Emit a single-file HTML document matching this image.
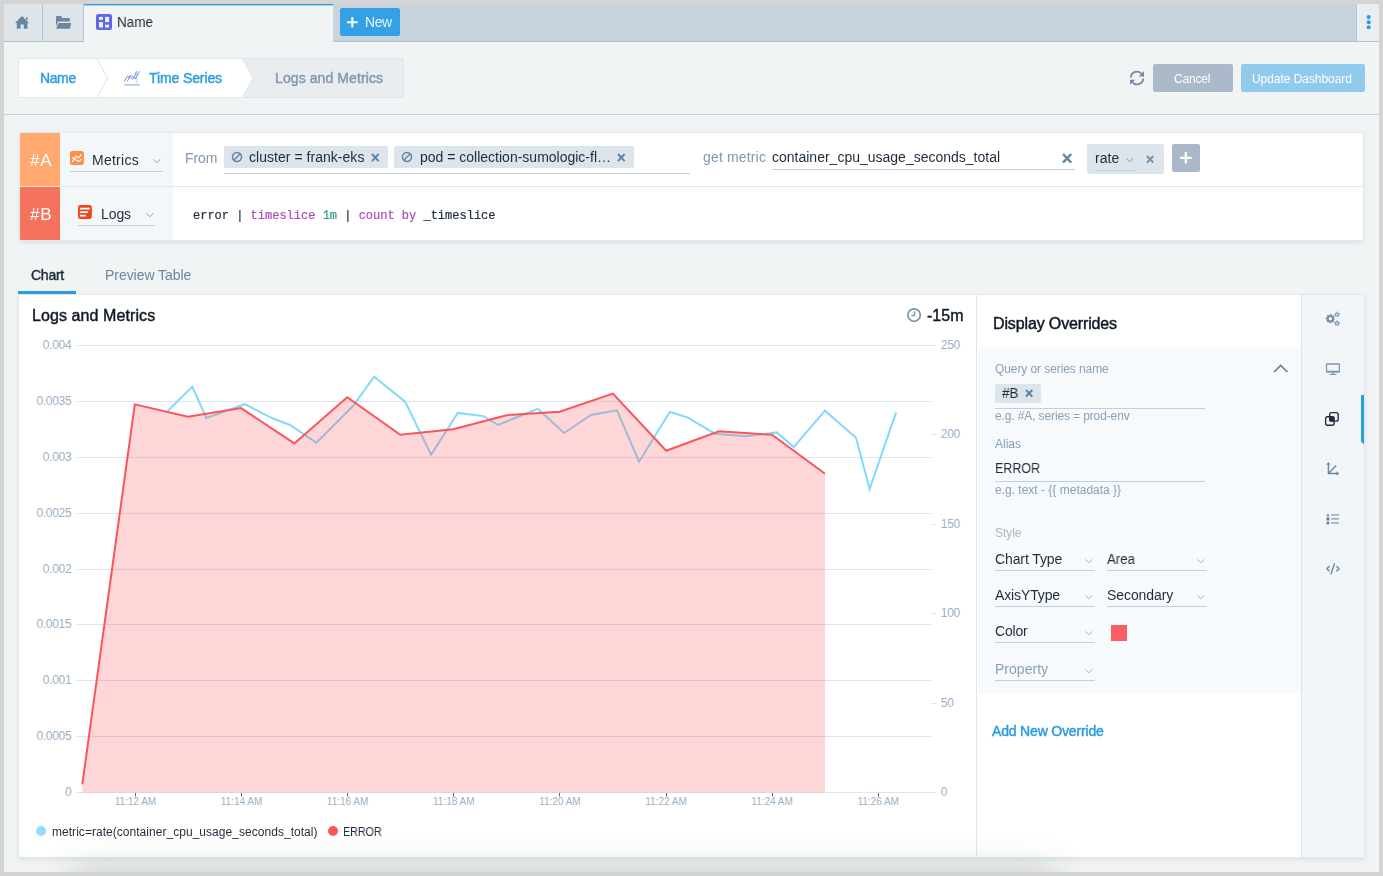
<!DOCTYPE html>
<html lang="en">
<head>
<meta charset="utf-8">
<title>Name - Logs and Metrics</title>
<style>
*{box-sizing:border-box}
html,body{margin:0;padding:0}
body{width:1383px;height:876px;position:relative;overflow:hidden;background:#d4d4d4;font-family:'Liberation Sans', sans-serif;}
.app{position:absolute;left:4px;top:4px;width:1375px;height:868px;background:#f0f4f5;overflow:hidden}
.s,.a{position:absolute}
.t{position:absolute;white-space:pre;line-height:20px;display:block;will-change:transform}
svg{display:block;overflow:visible}
.ul{position:absolute;height:1px;background:#c3cfda}
.code{-webkit-text-stroke:0.2px currentColor}
.chip{position:absolute;background:#dde4eb;border-radius:2px}
</style>
</head>
<body>
<div class="app"></div>

<!-- top tab bar -->
<header class="s" style="left:4px;top:4px;width:1375px;height:38px;background:#c8d4dd;border-bottom:1px solid #b3c1ce">
  <div class="a" style="left:0;top:0;width:39px;height:37px;background:#dde4ea;border-right:1px solid #b6c4d1"></div>
  <svg class="a" style="left:11.2px;top:11.8px" width="14.2" height="12.9" viewBox="15.2 15.8 14.2 12.9"><path fill="#6b859e" d="M22.25 15.9 L29.3 22.9 H27.7 V28.6 H24 V24.2 H20.7 V28.6 H17 V22.9 H15.2 Z M26.2 17 H27.7 V20.6 L26.2 19.2 Z"/></svg>
  <div class="a" style="left:39px;top:0;width:41px;height:37px;background:#dde4ea;border-right:1px solid #b6c4d1"></div>
  <svg class="a" style="left:52px;top:12.1px" width="15.2" height="12.9" viewBox="56 16.1 15.2 12.9"><path fill="#6b859e" d="M56 17.1 Q56 16.1 57 16.1 H60.8 Q61.8 16.1 61.8 17.1 V18.1 H68.9 Q69.9 18.1 69.9 19.1 V21.6 H59.2 Q57.9 21.6 57.4 22.8 L56 26.4 Z M59 23.1 H70.5 Q71.3 23.1 71.1 23.9 L70.1 28.1 Q69.9 28.9 69.1 28.9 H56.9 Q56.1 28.9 56.4 28.1 L58 23.9 Q58.3 23.1 59 23.1 Z"/></svg>
  <div class="a" style="left:80px;top:0;width:249px;height:38px;background:linear-gradient(#2d9de0,#2d9de0) 0 0/100% 1px no-repeat,linear-gradient(rgba(45,157,224,.38),rgba(45,157,224,.38)) 0 1px/100% 1px no-repeat,#f0f4f5"></div>
  <svg class="a" style="left:92px;top:10px" width="16" height="16" viewBox="0 0 16 16"><rect width="16" height="16" rx="2.2" fill="#5d68e2"/><rect x="3" y="2.9" width="4" height="2.9" fill="#eceeff"/><rect x="3" y="8" width="4" height="5.5" fill="#eceeff"/><rect x="9.1" y="2.9" width="4" height="5.2" fill="#eceeff"/><rect x="9.1" y="10.6" width="4" height="2.9" fill="#eceeff"/></svg>
  <span class="t" style="left:113.1px;top:8.0px;font-size:14px;color:#1f2c3b;transform:scaleX(0.964);transform-origin:0 0;">Name</span>
  <div class="a" style="left:336px;top:4px;width:60px;height:28px;background:#33a1e3;border-radius:2.5px"></div>
  <svg class="a" style="left:342.8px;top:13px" width="10.6" height="10.6" viewBox="0 0 10.6 10.6"><path d="M5.3 0 V10.6 M0 5.3 H10.6" stroke="#fff" stroke-width="2" fill="none"/></svg>
  <span class="t" style="left:360.8px;top:8.0px;font-size:14px;color:#e8f5fd;letter-spacing:-0.458px;">New</span>
  <div class="a" style="left:1352px;top:0;width:23px;height:37px;background:#eaeef2;border-left:1px solid #b9c7d4"></div>
  <svg class="a" style="left:1362px;top:10px" width="6" height="16" viewBox="1366 14 6 16"><circle cx="1368.7" cy="17.1" r="2.05" fill="#2a9ae3"/><circle cx="1368.7" cy="22.2" r="2.05" fill="#2a9ae3"/><circle cx="1368.7" cy="27.3" r="2.05" fill="#2a9ae3"/></svg>
</header>

<!-- breadcrumb + actions -->
<nav class="s" style="left:4px;top:42px;width:1375px;height:73px;border-bottom:1px solid #c3cfda">
  <svg class="a" style="left:14px;top:16px" width="387" height="40" viewBox="18 58 387 40">
    <path d="M240 58.5 H402 Q403.5 58.5 403.5 60 V96 Q403.5 97.5 402 97.5 H240 Z" fill="#e9edf0" stroke="#e0e6eb" stroke-width="1"/>
    <path d="M20.5 58.5 H242.2 L253.2 78 L242.2 97.5 H20.5 Q18.5 97.5 18.5 95.5 V60.5 Q18.5 58.5 20.5 58.5 Z" fill="#fff" stroke="#e0e6eb" stroke-width="1"/>
    <path d="M96.9 58.8 L107.6 78 L96.9 97.2" fill="none" stroke="#e0e6eb" stroke-width="1.1"/>
  </svg>
  <span class="t" style="left:35.7px;top:26.0px;font-size:14px;color:#2d9de0;letter-spacing:-0.386px;-webkit-text-stroke:0.45px #2d9de0;">Name</span>
  <svg class="a" style="left:120px;top:29px" width="16.2" height="15" viewBox="124 71 16.2 15"><path d="M124.2 84.85 H140" stroke="#b9c4ee" stroke-width="1.7"/><path d="M136.6 71.2 V83.2" stroke="#b5ebe6" stroke-width="1.5"/><path d="M124.3 81.6 L127.3 76.1 L129.4 77.1 L132.6 78.9 L134.2 77.4 L136.5 71.4 M127.3 81.4 L130.4 75.3 L133.6 77.4 L135.5 78.5 L139.5 71.4" fill="none" stroke="#5a78d8" stroke-width="0.85"/></svg>
  <span class="t" style="left:144.8px;top:26.0px;font-size:14px;color:#2d9de0;letter-spacing:-0.107px;-webkit-text-stroke:0.45px #2d9de0;">Time Series</span>
  <span class="t" style="left:270.9px;top:26.0px;font-size:14px;color:#8299ae;letter-spacing:0.093px;-webkit-text-stroke:0.45px #8299ae;">Logs and Metrics</span>
  <svg class="a" style="left:1124.9px;top:28.1px" width="16" height="16" viewBox="-8 -8 16 16"><path d="M-6.3 -0.5 A6.25 6.25 0 0 1 5 -3.8 M6.3 0.5 A6.25 6.25 0 0 1 -5 3.8" fill="none" stroke="#7089a3" stroke-width="1.8"/><path d="M7 -7 V-1.5 H1.7 Z M-7 6.8 V1.8 H-1.9 Z" fill="#7089a3"/></svg>
  <div class="a" style="left:1149px;top:22.3px;width:80px;height:27.6px;background:#abb9cb;border-radius:2px"></div>
  <span class="t" style="left:1170.1px;top:27.0px;font-size:12px;color:#fff;letter-spacing:-0.192px;">Cancel</span>
  <div class="a" style="left:1237px;top:22.3px;width:124px;height:27.6px;background:#90caec;border-radius:2px"></div>
  <span class="t" style="left:1248.4px;top:27.0px;font-size:12px;color:#fff;letter-spacing:-0.056px;">Update Dashboard</span>
</nav>

<!-- query builder -->
<section class="s" style="left:20px;top:133px;width:1343px;height:107px;background:#fff;border-radius:2px;box-shadow:0 0 0 1px #e3e9ee,0 2px 5px rgba(60,80,100,.16)">
  <div class="a" style="left:0;top:0;width:40px;height:53.5px;background:#ffa86f;border-radius:1px 0 0 0"></div>
  <div class="a" style="left:0;top:53.5px;width:40px;height:53.5px;background:#f4735c;border-radius:0 0 0 1px"></div>
  <div class="a" style="left:40px;top:0;width:113px;height:107px;background:#f4f7fa"></div>
  <div class="a" style="left:40px;top:53px;width:1303px;height:1px;background:#e0e6ec"></div><div class="a" style="left:0;top:53px;width:40px;height:1px;background:rgba(240,244,247,.75)"></div>
  <span class="t" style="left:9.5px;top:18.0px;font-size:17px;color:#fff;letter-spacing:0.903px;">#A</span>
  <span class="t" style="left:9.5px;top:72.0px;font-size:17px;color:#fff;letter-spacing:0.903px;">#B</span>
  <!-- row A -->
  <svg class="a" style="left:50.2px;top:18px" width="13.9" height="14.1" viewBox="0 0 13.9 14.1"><rect width="13.9" height="14.1" rx="2.2" fill="#ff8f47"/><path d="M2.2 10.8 L6.2 5.2 L8.8 6.8 L11.5 3.3 M2.2 6.5 L5.6 8.7 L8.8 10.6 L11.5 8.1" fill="none" stroke="#fff" stroke-width="1.25"/></svg>
  <span class="t" style="left:72.4px;top:17.0px;font-size:14px;color:#1f2c3b;letter-spacing:0.262px;">Metrics</span>
  <svg class="a" style="left:131.30px;top:23.80px" width="11.60" height="8.20" viewBox="-2 -2 11.60 8.20"><path d="M0.3 0.3 L3.80 3.70 L7.30 0.3" fill="none" stroke="#8b9eb2" stroke-width="1.0"/></svg>
  <div class="ul" style="left:50.3px;top:38px;width:92.6px"></div>
  <span class="t" style="left:165.3px;top:15.0px;font-size:14px;color:#8198ae;letter-spacing:-0.124px;">From</span>
  <div class="chip" style="left:204.2px;top:13.3px;width:163.8px;height:21.7px"></div>
  <svg class="a" style="left:211.20px;top:18.10px" width="12" height="12" viewBox="-6 -6 12 12"><circle r="4.55" fill="none" stroke="#5f82a3" stroke-width="1.4"/><path d="M-3.2 3.2 L3.2 -3.2" stroke="#5f82a3" stroke-width="1.4"/></svg>
  <span class="t" style="left:229.2px;top:14.0px;font-size:14px;color:#1f2c3b;letter-spacing:0.035px;">cluster = frank-eks</span>
  <svg class="a" style="left:349.80px;top:18.65px" width="10.6" height="11.1" viewBox="-5.3 -5.55 10.6 11.1"><path d="M-3.3 -3.55 L3.3 3.55 M3.3 -3.55 L-3.3 3.55" fill="none" stroke="#5f82a3" stroke-width="1.9"/></svg>
  <div class="chip" style="left:374.1px;top:13.3px;width:239.7px;height:21.7px"></div>
  <svg class="a" style="left:380.80px;top:18.10px" width="12" height="12" viewBox="-6 -6 12 12"><circle r="4.55" fill="none" stroke="#5f82a3" stroke-width="1.4"/><path d="M-3.2 3.2 L3.2 -3.2" stroke="#5f82a3" stroke-width="1.4"/></svg>
  <span class="t" style="left:399.5px;top:14.0px;font-size:14px;color:#1f2c3b;">pod = collection-sumologic-fl…</span>
  <svg class="a" style="left:595.70px;top:18.65px" width="10.6" height="11.1" viewBox="-5.3 -5.55 10.6 11.1"><path d="M-3.3 -3.55 L3.3 3.55 M3.3 -3.55 L-3.3 3.55" fill="none" stroke="#5f82a3" stroke-width="1.9"/></svg>
  <div class="ul" style="left:204.2px;top:40px;width:465.7px"></div>
  <span class="t" style="left:682.7px;top:14.0px;font-size:14px;color:#8198ae;letter-spacing:0.159px;">get metric</span>
  <span class="t" style="left:752.1px;top:14.0px;font-size:14px;color:#1f2c3b;">container_cpu_usage_seconds_total</span>
  <svg class="a" style="left:1040.60px;top:18.90px" width="12.2" height="12.6" viewBox="-6.1 -6.3 12.2 12.6"><path d="M-4.1 -4.3 L4.1 4.3 M4.1 -4.3 L-4.1 4.3" fill="none" stroke="#6b859e" stroke-width="2.4"/></svg>
  <div class="ul" style="left:752px;top:36px;width:302.5px"></div>
  <div class="chip" style="left:1067.1px;top:11.1px;width:76.8px;height:29.7px"></div>
  <span class="t" style="left:1075.1px;top:15.0px;font-size:14px;color:#1f2c3b;letter-spacing:0.058px;">rate</span>
  <svg class="a" style="left:1104.00px;top:22.90px" width="11.50" height="8.10" viewBox="-2 -2 11.50 8.10"><path d="M0.3 0.3 L3.75 3.60 L7.20 0.3" fill="none" stroke="#8b9eb2" stroke-width="1.0"/></svg>
  <div class="ul" style="left:1074.7px;top:37px;width:41.2px"></div>
  <svg class="a" style="left:1124.75px;top:20.75px" width="10.3" height="10.7" viewBox="-5.15 -5.35 10.3 10.7"><path d="M-3.15 -3.35 L3.15 3.35 M3.15 -3.35 L-3.15 3.35" fill="none" stroke="#7390ad" stroke-width="1.9"/></svg>
  <div class="a" style="left:1151.9px;top:11.1px;width:28px;height:27.8px;background:#aab7c8;border-radius:2px"></div>
  <svg class="a" style="left:1160.1px;top:19.2px" width="11.6" height="11.6" viewBox="0 0 11.6 11.6"><path d="M5.8 0 V11.6 M0 5.8 H11.6" stroke="#fff" stroke-width="2.2" fill="none"/></svg>
  <!-- row B -->
  <svg class="a" style="left:58.2px;top:72px" width="13.9" height="14.1" viewBox="0 0 13.9 14.1"><rect width="13.9" height="14.1" rx="2.4" fill="#f2451f"/><path d="M1.9 3.6 H11.8 M1.9 7.1 H10.1 M1.9 10.6 H7.8" fill="none" stroke="#fff" stroke-width="1.6"/></svg>
  <span class="t" style="left:80.7px;top:71.0px;font-size:14px;color:#1f2c3b;letter-spacing:-0.086px;">Logs</span>
  <svg class="a" style="left:123.50px;top:77.80px" width="11.60" height="8.20" viewBox="-2 -2 11.60 8.20"><path d="M0.3 0.3 L3.80 3.70 L7.30 0.3" fill="none" stroke="#8b9eb2" stroke-width="1.0"/></svg>
  <div class="ul" style="left:58.3px;top:92px;width:76.6px"></div>
  <span class="t code" style="left:173.4px;top:73.0px;font-size:12px;color:#1f2c3b;font-family:'Liberation Mono', monospace;">error | <span style="color:#b04ab5">timeslice</span> <span style="color:#2a9d8f">1m</span> | <span style="color:#b04ab5">count</span> <span style="color:#b04ab5">by</span> _timeslice</span>
</section>

<!-- view tabs -->
<div class="s" style="left:19px;top:255px;width:400px;height:40px;">
  <span class="t" style="left:11.6px;top:10.0px;font-size:14px;color:#1f2c3b;letter-spacing:-0.259px;-webkit-text-stroke:0.45px #1f2c3b;">Chart</span>
  <span class="t" style="left:86.0px;top:10.0px;font-size:14px;color:#6b859e;letter-spacing:-0.051px;">Preview Table</span>
  <div class="a" style="left:-1px;top:36px;width:58px;height:3px;background:#2d9de0"></div>
</div>

<!-- main panel -->
<main class="s" style="left:19px;top:295px;width:1345px;height:562px;background:#fff;box-shadow:0 0 0 1px #e1e7ec,0 2px 5px rgba(60,80,100,.14)">
  <!-- chart -->
  <div class="a" style="left:0;top:0;width:958px;height:562px">
    <svg class="a" style="left:0;top:0" width="958" height="562" viewBox="19 295 958 562">
<style>.ax{font:12px 'Liberation Sans',sans-serif;fill:#9db1c5;letter-spacing:-0.3px}.axx{font:10px 'Liberation Sans',sans-serif;fill:#9db1c5}</style>
<line x1="76.5" x2="931" y1="792.5" y2="792.5" stroke="#dde5ec" stroke-width="1"/><text x="71.3" y="796.3" text-anchor="end" class="ax">0</text><line x1="76.5" x2="931" y1="736.5" y2="736.5" stroke="#dde5ec" stroke-width="1"/><text x="71.3" y="740.3" text-anchor="end" class="ax">0.0005</text><line x1="76.5" x2="931" y1="680.5" y2="680.5" stroke="#dde5ec" stroke-width="1"/><text x="71.3" y="684.3" text-anchor="end" class="ax">0.001</text><line x1="76.5" x2="931" y1="624.5" y2="624.5" stroke="#dde5ec" stroke-width="1"/><text x="71.3" y="628.3" text-anchor="end" class="ax">0.0015</text><line x1="76.5" x2="931" y1="569.5" y2="569.5" stroke="#dde5ec" stroke-width="1"/><text x="71.3" y="573.3" text-anchor="end" class="ax">0.002</text><line x1="76.5" x2="931" y1="513.5" y2="513.5" stroke="#dde5ec" stroke-width="1"/><text x="71.3" y="517.3" text-anchor="end" class="ax">0.0025</text><line x1="76.5" x2="931" y1="457.5" y2="457.5" stroke="#dde5ec" stroke-width="1"/><text x="71.3" y="461.3" text-anchor="end" class="ax">0.003</text><line x1="76.5" x2="931" y1="401.5" y2="401.5" stroke="#dde5ec" stroke-width="1"/><text x="71.3" y="405.3" text-anchor="end" class="ax">0.0035</text><line x1="76.5" x2="931" y1="345.5" y2="345.5" stroke="#dde5ec" stroke-width="1"/><text x="71.3" y="349.3" text-anchor="end" class="ax">0.004</text><line x1="931" x2="936" y1="792.5" y2="792.5" stroke="#dde5ec" stroke-width="1"/><text x="940.8" y="796.3" class="ax">0</text><line x1="931" x2="936" y1="703.5" y2="703.5" stroke="#dde5ec" stroke-width="1"/><text x="940.8" y="707.3" class="ax">50</text><line x1="931" x2="936" y1="613.5" y2="613.5" stroke="#dde5ec" stroke-width="1"/><text x="940.8" y="617.3" class="ax">100</text><line x1="931" x2="936" y1="524.5" y2="524.5" stroke="#dde5ec" stroke-width="1"/><text x="940.8" y="528.3" class="ax">150</text><line x1="931" x2="936" y1="434.5" y2="434.5" stroke="#dde5ec" stroke-width="1"/><text x="940.8" y="438.3" class="ax">200</text><line x1="931" x2="936" y1="345.5" y2="345.5" stroke="#dde5ec" stroke-width="1"/><text x="940.8" y="349.3" class="ax">250</text>
<polyline points="166.3,412.4 192.3,386.8 206.4,417.9 244.8,404.2 272.6,418.3 290.0,425.0 316.4,442.8 353.0,406.0 374.1,376.6 405.1,401.6 431.1,454.7 457.8,412.9 483.8,416.1 497.9,425.0 537.8,408.7 564.1,433.0 591.0,415.0 617.0,410.3 639.0,461.7 669.8,412.0 687.4,417.4 715.0,433.7 745.8,436.3 776.8,432.4 793.7,447.1 825.0,410.7 856.0,437.8 869.6,489.0 896.1,412.4" fill="none" stroke="#82d9fb" stroke-width="2" stroke-linejoin="miter"/>
<polygon points="82.3,784.4 134.8,404.4 188.0,416.8 241.1,408.1 294.3,443.4 347.2,397.2 400.3,434.8 453.2,429.3 506.6,415.2 559.7,411.8 612.9,393.6 666.2,450.8 718.9,431.3 772.0,434.8 825.0,473.8 825,792.5 82.3,792.5" fill="#fb5d61" fill-opacity="0.25"/>
<polyline points="82.3,784.4 134.8,404.4 188.0,416.8 241.1,408.1 294.3,443.4 347.2,397.2 400.3,434.8 453.2,429.3 506.6,415.2 559.7,411.8 612.9,393.6 666.2,450.8 718.9,431.3 772.0,434.8 825.0,473.8" fill="none" stroke="#f9565b" stroke-width="2" stroke-linejoin="miter"/>
<line x1="135.5" x2="135.5" y1="793" y2="796.5" stroke="#5b6b7c" stroke-width="1"/><text x="135.4" y="805.3" text-anchor="middle" class="axx">11:12 AM</text><line x1="241.5" x2="241.5" y1="793" y2="796.5" stroke="#5b6b7c" stroke-width="1"/><text x="241.5" y="805.3" text-anchor="middle" class="axx">11:14 AM</text><line x1="347.5" x2="347.5" y1="793" y2="796.5" stroke="#5b6b7c" stroke-width="1"/><text x="347.6" y="805.3" text-anchor="middle" class="axx">11:16 AM</text><line x1="453.5" x2="453.5" y1="793" y2="796.5" stroke="#5b6b7c" stroke-width="1"/><text x="453.8" y="805.3" text-anchor="middle" class="axx">11:18 AM</text><line x1="559.5" x2="559.5" y1="793" y2="796.5" stroke="#5b6b7c" stroke-width="1"/><text x="559.9" y="805.3" text-anchor="middle" class="axx">11:20 AM</text><line x1="666.5" x2="666.5" y1="793" y2="796.5" stroke="#5b6b7c" stroke-width="1"/><text x="666.0" y="805.3" text-anchor="middle" class="axx">11:22 AM</text><line x1="772.5" x2="772.5" y1="793" y2="796.5" stroke="#5b6b7c" stroke-width="1"/><text x="772.1" y="805.3" text-anchor="middle" class="axx">11:24 AM</text><line x1="878.5" x2="878.5" y1="793" y2="796.5" stroke="#5b6b7c" stroke-width="1"/><text x="878.2" y="805.3" text-anchor="middle" class="axx">11:26 AM</text>
</svg>
    <span class="t" style="left:12.7px;top:11.0px;font-size:16px;color:#111a24;letter-spacing:0.090px;-webkit-text-stroke:0.45px #111a24;">Logs and Metrics</span>
    <svg class="a" style="left:887.8px;top:13px" width="14.2" height="14.2" viewBox="0 0 14.2 14.2"><circle cx="7.1" cy="7.1" r="6.2" fill="none" stroke="#7a96b2" stroke-width="1.7"/><path d="M7.5 3.2 V7.6 H4.3" fill="none" stroke="#7a96b2" stroke-width="1.4"/></svg>
    <span class="t" style="left:907.8px;top:11.0px;font-size:16px;color:#111a24;letter-spacing:0.016px;-webkit-text-stroke:0.45px #111a24;">-15m</span>
    <div class="a" style="left:17.3px;top:530.8px;width:10px;height:10px;border-radius:5px;background:#8fdcfb"></div>
    <span class="t" style="left:32.5px;top:527.0px;font-size:12px;color:#1f2c3b;letter-spacing:0.037px;">metric=rate(container_cpu_usage_seconds_total)</span>
    <div class="a" style="left:309.2px;top:530.6px;width:10px;height:10px;border-radius:5px;background:#f9565b"></div>
    <span class="t" style="left:323.7px;top:527.0px;font-size:12px;color:#1f2c3b;transform:scaleX(0.893);transform-origin:0 0;">ERROR</span>
  </div>
  <!-- display overrides -->
  <div class="a" style="left:959px;top:52px;width:323px;height:347.4px;background:#f6fafd"></div>
  <div class="a" style="left:957px;top:0;width:1px;height:562px;background:#dfe5ea"></div>
  <span class="t" style="left:974.4px;top:19.0px;font-size:16px;color:#111a24;letter-spacing:-0.135px;-webkit-text-stroke:0.45px #111a24;">Display Overrides</span>
  <span class="t" style="left:976.1px;top:64.0px;font-size:12px;color:#8aa0b5;letter-spacing:-0.084px;">Query or series name</span>
  <svg class="a" style="left:1254.3px;top:68.5px" width="15.4" height="9.4" viewBox="-1 -1 15.4 9.4"><path d="M0 7 L6.7 0.4 L13.4 7" fill="none" stroke="#5f7d9c" stroke-width="1.7"/></svg>
  <div class="chip" style="left:976.1px;top:88.5px;width:45.7px;height:19.2px"></div>
  <span class="t" style="left:982.5px;top:88.0px;font-size:14px;color:#1f2c3b;transform:scaleX(0.958);transform-origin:0 0;">#B</span>
  <svg class="a" style="left:1004.75px;top:92.75px" width="10.3" height="10.5" viewBox="-5.15 -5.25 10.3 10.5"><path d="M-3.15 -3.25 L3.15 3.25 M3.15 -3.25 L-3.15 3.25" fill="none" stroke="#5f82a3" stroke-width="1.9"/></svg>
  <div class="ul" style="left:976.1px;top:113px;width:209.7px"></div>
  <span class="t" style="left:976.1px;top:111.0px;font-size:12px;color:#8aa0b5;letter-spacing:-0.122px;">e.g. #A, series = prod-env</span>
  <span class="t" style="left:976.1px;top:139.0px;font-size:12px;color:#8aa0b5;">Alias</span>
  <span class="t" style="left:976.1px;top:163.0px;font-size:14px;color:#1f2c3b;transform:scaleX(0.890);transform-origin:0 0;">ERROR</span>
  <div class="ul" style="left:976.1px;top:186px;width:209.7px"></div>
  <span class="t" style="left:976.1px;top:185.0px;font-size:12px;color:#8aa0b5;">e.g. text - {{ metadata }}</span>
  <span class="t" style="left:976.1px;top:228.0px;font-size:12px;color:#a8b8c8;letter-spacing:-0.047px;">Style</span>
  <span class="t" style="left:976.1px;top:254.0px;font-size:14px;color:#1f2c3b;letter-spacing:-0.104px;">Chart Type</span>
  <svg class="a" style="left:1064.00px;top:261.80px" width="11.60" height="8.20" viewBox="-2 -2 11.60 8.20"><path d="M0.3 0.3 L3.80 3.70 L7.30 0.3" fill="none" stroke="#a3b3c3" stroke-width="1.0"/></svg>
  <div class="ul" style="left:976.1px;top:274.5px;width:99.5px"></div>
  <span class="t" style="left:1088.2px;top:254.0px;font-size:14px;color:#1f2c3b;transform:scaleX(0.947);transform-origin:0 0;">Area</span>
  <svg class="a" style="left:1175.90px;top:261.80px" width="11.60" height="8.20" viewBox="-2 -2 11.60 8.20"><path d="M0.3 0.3 L3.80 3.70 L7.30 0.3" fill="none" stroke="#a3b3c3" stroke-width="1.0"/></svg>
  <div class="ul" style="left:1087.9px;top:274.5px;width:99.8px"></div>
  <span class="t" style="left:976.1px;top:290.0px;font-size:14px;color:#1f2c3b;letter-spacing:-0.130px;">AxisYType</span>
  <svg class="a" style="left:1064.00px;top:297.90px" width="11.60" height="8.20" viewBox="-2 -2 11.60 8.20"><path d="M0.3 0.3 L3.80 3.70 L7.30 0.3" fill="none" stroke="#a3b3c3" stroke-width="1.0"/></svg>
  <div class="ul" style="left:976.1px;top:311px;width:99.5px"></div>
  <span class="t" style="left:1088.2px;top:290.0px;font-size:14px;color:#1f2c3b;letter-spacing:-0.080px;">Secondary</span>
  <svg class="a" style="left:1175.90px;top:297.90px" width="11.60" height="8.20" viewBox="-2 -2 11.60 8.20"><path d="M0.3 0.3 L3.80 3.70 L7.30 0.3" fill="none" stroke="#a3b3c3" stroke-width="1.0"/></svg>
  <div class="ul" style="left:1087.9px;top:311px;width:99.8px"></div>
  <span class="t" style="left:976.1px;top:326.0px;font-size:14px;color:#1f2c3b;letter-spacing:-0.192px;">Color</span>
  <svg class="a" style="left:1064.00px;top:333.80px" width="11.60" height="8.20" viewBox="-2 -2 11.60 8.20"><path d="M0.3 0.3 L3.80 3.70 L7.30 0.3" fill="none" stroke="#a3b3c3" stroke-width="1.0"/></svg>
  <div class="ul" style="left:976.1px;top:347px;width:99.5px"></div>
  <div class="a" style="left:1091.6px;top:329.8px;width:16.4px;height:16.2px;background:#fb5d61"></div>
  <span class="t" style="left:976.1px;top:364.0px;font-size:14px;color:#8aa0b5;letter-spacing:0.025px;">Property</span>
  <svg class="a" style="left:1064.00px;top:371.70px" width="11.60" height="8.20" viewBox="-2 -2 11.60 8.20"><path d="M0.3 0.3 L3.80 3.70 L7.30 0.3" fill="none" stroke="#a3b3c3" stroke-width="1.0"/></svg>
  <div class="ul" style="left:976.1px;top:384.7px;width:99.5px"></div>
  <span class="t" style="left:972.9px;top:426.0px;font-size:14px;color:#2b9ce3;letter-spacing:-0.173px;-webkit-text-stroke:0.45px #2b9ce3;">Add New Override</span>
  <!-- right icon rail -->
  <div class="a" style="left:1282px;top:0;width:63px;height:562px;background:#f3f6f9;border-left:1px solid #dde4eb"></div>
  <div class="a" style="left:1342px;top:100px;width:3px;height:49.5px;background:#2d9de0;clip-path:polygon(0 0,100% 0,100% 100%,0 94%)"></div>
  <svg class="a" style="left:1296px;top:5px" width="36" height="290" viewBox="1315 300 36 290">
    <g fill="none" stroke="#758da6">
      <circle cx="1330.4" cy="318.7" r="2.75" stroke-width="2.1"/>
      <circle cx="1330.4" cy="318.7" r="4.0" stroke-width="1.3" stroke-dasharray="1.5 1.64" stroke-dashoffset="0.75"/>
      <circle cx="1337.1" cy="314.5" r="1.55" stroke-width="1.1"/>
      <circle cx="1337.1" cy="314.5" r="2.4" stroke-width="0.9" stroke-dasharray="1.2 1.31" stroke-dashoffset="0.6"/>
      <circle cx="1337.1" cy="323.4" r="1.55" stroke-width="1.1"/>
      <circle cx="1337.1" cy="323.4" r="2.4" stroke-width="0.9" stroke-dasharray="1.2 1.31" stroke-dashoffset="0.6"/>
    </g>
    <path fill="#7d95ad" fill-rule="evenodd" d="M1326.9 363.2 H1338.9 Q1339.9 363.2 1339.9 364.2 V371.8 Q1339.9 372.8 1338.9 372.8 H1326.9 Q1325.9 372.8 1325.9 371.8 V364.2 Q1325.9 363.2 1326.9 363.2 Z M1327.1 364.8 V370.7 H1338.7 V364.8 Z"/>
    <path fill="#7d95ad" d="M1332 372.8 H1333.8 V374 H1336.4 V374.9 H1329.4 V374 H1332 Z"/>
    <g fill="none" stroke="#1f2c3b" stroke-width="1.35">
      <rect x="1329.7" y="412.6" width="8.5" height="8.5" rx="1.9"/>
      <rect x="1325.6" y="416.7" width="8.5" height="8.5" rx="1.9"/>
    </g>
    <rect x="1329.4" y="416.4" width="5" height="5" rx="1" fill="#1f2c3b"/>
    <g fill="none" stroke="#6b859e" stroke-width="1.4">
      <path d="M1328.4 464.4 V473.5 H1336.6 M1328.6 473.3 L1336.2 465.6"/>
      <path d="M1326.5 568.7 L1329.6 566.3 M1326.5 568.7 L1329.6 571.3 M1339.5 568.7 L1336.3 566.3 M1339.5 568.7 L1336.3 571.3 M1334.6 563.3 L1330.9 574.4" stroke-linecap="butt"/>
    </g>
    <path fill="#6b859e" d="M1328.4 462 L1330.6 464.8 H1326.2 Z M1339.3 473.5 L1336.4 475.7 V471.3 Z"/>
    <path fill="#5f7d9c" d="M1327.95 513.4 L1329.5 516.3 H1326.4 Z M1326.5 517.5 H1329.4 V520.4 H1326.5 Z"/>
    <circle cx="1327.95" cy="522.9" r="1.5" fill="#5f7d9c"/>
    <path stroke="#9fb1c4" stroke-width="1.6" d="M1331.2 514.9 H1339.1 M1331.2 518.9 H1339.1 M1331.2 522.9 H1339.1"/>
  </svg>
</main>
<div class="a" style="left:4px;top:800px;width:1375px;height:72px;overflow:hidden;pointer-events:none"><div class="a" style="left:70px;top:80px;width:980px;height:30px;border-radius:8px;box-shadow:0 0 38px 4px rgba(20,30,40,.26)"></div></div>
</body>
</html>
